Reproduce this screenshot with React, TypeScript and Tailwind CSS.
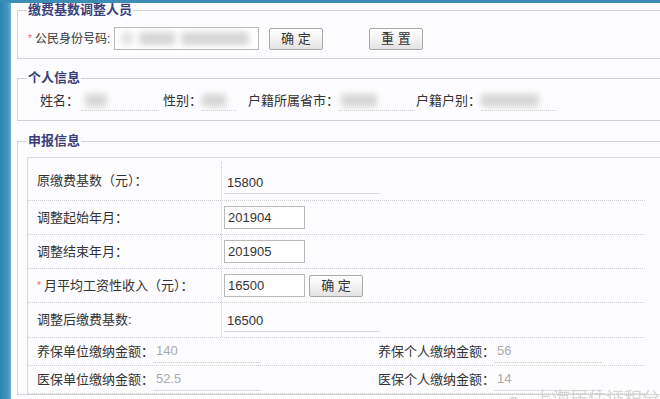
const font = { fontFamily: '"Liberation Sans", "Noto Sans CJK SC", sans-serif' };

const Btn = ({ label, className = "" }: { label: string; className?: string }) => (
  <button
    type="button"
    className={`h-[22px] w-[54px] shrink-0 rounded-[2px] border border-[#a9a9a9] bg-[linear-gradient(180deg,#ffffff_0%,#f1f1f1_55%,#e2e2e2_100%)] text-[13px] leading-none text-[#333] ${className}`}
  >
    {label}
  </button>
);

const Blur = ({ w, className = "" }: { w: string; className?: string }) => (
  <span className={`inline-block h-[13px] rounded-[3px] bg-[#d6d6d6] blur-[3px] ${w} ${className}`} />
);

const TableRow = ({ h, label, star, children }: { h: string; label: string; star?: boolean; children: React.ReactNode }) => (
  <div className={`mr-[17px] flex border-b border-dotted border-[#cfcfcf] ${h}`}>
    <div className="flex w-[194px] shrink-0 items-center whitespace-nowrap border-r border-dotted border-[#cfcfcf] pl-[9px] text-[13px] text-[#333]">
      {star && <span className="mr-[3px] text-[10px] text-[#e06a6a]">*</span>}
      {label}
    </div>
    <div className="flex items-center pl-[2px]">{children}</div>
  </div>
);

const Input = ({ value }: { value: string }) => (
  <div className="flex h-[23px] w-[81px] items-center border border-[#b9b9b9] bg-white pl-[3px] text-[13px] text-[#333]">{value}</div>
);

const Readonly = ({ value, className = "" }: { value: string; className?: string }) => (
  <div className={`flex h-[22px] w-[156px] items-center border-b border-[#d8d8d8] pl-[3px] text-[13px] text-[#333] ${className}`}>{value}</div>
);

const Pair = ({ label, value, w }: { label: string; value: string; w: string }) => (
  <div className={`flex shrink-0 items-center ${w}`}>
    <span className="w-[116px] shrink-0 whitespace-nowrap text-[13px] text-[#333]">{label}</span>
    <span className="flex h-[22px] w-[108px] items-center border-b border-[#dcdcdc] pl-[3px] text-[13px] text-[#aaa]">{value}</span>
  </div>
);

export default function App() {
  return (
    <div style={font} className="relative flex h-[399px] w-[660px] overflow-hidden border-t-[3px] border-[#3d8cb6] bg-[#fdfcfe]">
      <div className="w-[11px] shrink-0 bg-[linear-gradient(90deg,#2e82b0_0%,#4497c3_70%,#6aaed0_100%)]" />
      <div className="-mr-[12px] min-w-0 flex-1 pl-[6px]">
        <fieldset className="border border-[#d2d2d2] px-[9px]">
          <legend className="px-[1px] text-[13px] font-bold leading-[14px] text-[#3a3f7c]">缴费基数调整人员</legend>
          <div className="mb-[8px] mt-[10px] flex h-[23px] items-center">
            <span className="ml-[1px] mr-[3px] text-[10px] text-[#e06a6a]">*</span>
            <span className="w-[79px] whitespace-nowrap text-[12px] text-[#333]">公民身份号码:</span>
            <div className="flex h-[23px] w-[145px] items-center gap-[6px] border border-[#b9b9b9] bg-white pl-[6px]">
              <Blur w="w-[12px]" className="bg-[#e4e4e4]" />
              <Blur w="w-[36px]" />
              <Blur w="w-[68px]" />
            </div>
            <Btn label="确 定" className="ml-[10px]" />
            <Btn label="重 置" className="ml-[46px]" />
          </div>
        </fieldset>

        <fieldset className="mt-[12px] border border-[#d2d2d2] px-[9px]">
          <legend className="px-[1px] text-[13px] font-bold leading-[14px] text-[#3a3f7c]">个人信息</legend>
          <div className="mb-[9px] mt-[6px] flex h-[20px] items-center whitespace-nowrap pl-[13px] text-[13px] text-[#333]">
            <div className="flex w-[123px] items-center">
              <span>姓名：</span>
              <span className="ml-[2px] flex h-[20px] w-[78px] items-center border-b border-dotted border-[#cfcfcf] pl-[4px]"><Blur w="w-[22px]" /></span>
            </div>
            <div className="flex w-[85px] items-center">
              <span>性别：</span>
              <span className="flex h-[20px] w-[34px] items-center border-b border-dotted border-[#cfcfcf]"><Blur w="w-[24px]" /></span>
            </div>
            <div className="flex w-[168px] items-center">
              <span>户籍所属省市：</span>
              <span className="flex h-[20px] w-[76px] items-center border-b border-dotted border-[#cfcfcf] pl-[2px]"><Blur w="w-[36px]" /></span>
            </div>
            <div className="flex items-center">
              <span>户籍户别：</span>
              <span className="flex h-[20px] w-[76px] items-center border-b border-dotted border-[#cfcfcf]"><Blur w="w-[58px]" /></span>
            </div>
          </div>
        </fieldset>

        <fieldset className="mt-[13px] border border-[#d2d2d2] px-[9px]">
          <legend className="px-[1px] text-[13px] font-bold leading-[14px] text-[#3a3f7c]">申报信息</legend>
          <div className="mt-[9px] border-l border-t border-[#d8d8d8]">
            <TableRow h="h-[43px] pt-[4px]" label="原缴费基数（元）：">
              <Readonly value="15800" className="mt-[4px]" />
            </TableRow>
            <TableRow h="h-[34px]" label="调整起始年月：">
              <Input value="201904" />
            </TableRow>
            <TableRow h="h-[34px]" label="调整结束年月：">
              <Input value="201905" />
            </TableRow>
            <TableRow h="h-[34px]" label="月平均工资性收入（元）：" star>
              <Input value="16500" />
              <Btn label="确 定" className="ml-[4px]" />
            </TableRow>
            <TableRow h="h-[35px]" label="调整后缴费基数:">
              <Readonly value="16500" className="mt-[2px]" />
            </TableRow>
            <div className="mr-[17px] flex h-[28px] items-center border-b border-dotted border-[#cfcfcf] pl-[9px]">
              <Pair w="w-[341px]" label="养保单位缴纳金额：" value="140" />
              <Pair w="" label="养保个人缴纳金额：" value="56" />
            </div>
            <div className="mr-[17px] flex h-[28px] items-center border-b border-dotted border-[#cfcfcf] pl-[9px]">
              <Pair w="w-[341px]" label="医保单位缴纳金额：" value="52.5" />
              <Pair w="" label="医保个人缴纳金额：" value="14" />
            </div>
          </div>
        </fieldset>
      </div>

      <div className="pointer-events-none absolute left-[506px] top-[383px] flex items-center gap-[4px] whitespace-nowrap text-[18px] text-[#cfcfcf] opacity-80">
        <svg width="24" height="18" viewBox="0 0 24 18" fill="none" stroke="#c9c9c9" strokeWidth="1.5">
          <path d="M3 9 Q8 4 12 9 T21 9" />
          <circle cx="8" cy="14" r="2" />
        </svg>
        <span>上海居住证积分通</span>
      </div>
    </div>
  );
}
